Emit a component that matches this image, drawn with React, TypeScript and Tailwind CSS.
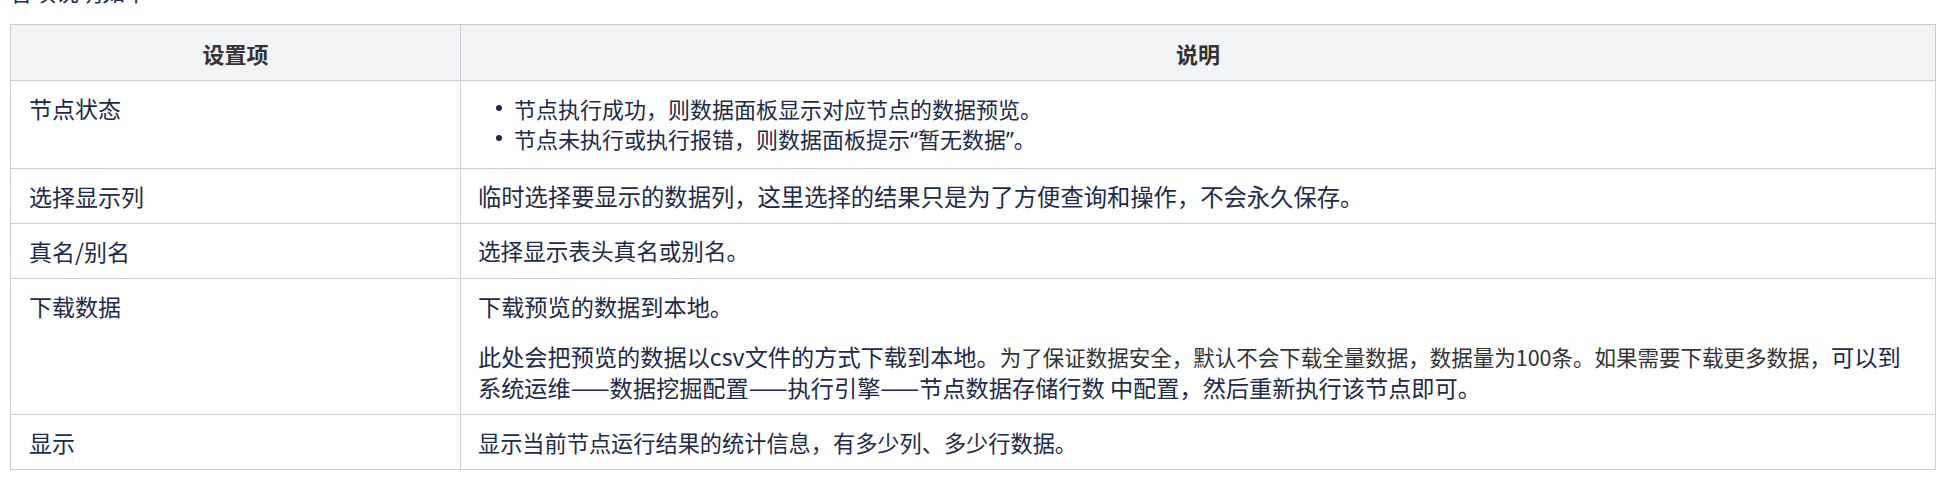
import React from "react";

const font = { fontFamily: '"Noto Sans CJK SC", "Noto Sans", sans-serif' };

function Dot() {
  return <span className="ml-[18px] mr-[12px] mt-[12px] h-[6px] w-[6px] shrink-0 rounded-full bg-[#1d2a4a]" />;
}

export default function App() {
  return (
    <div className="w-[1946px] h-[484px] overflow-hidden bg-white px-[10px]" style={font}>
      <div className="-mt-[24px] h-[30px] leading-[30px] text-[23px] text-[#1d2a4a]">各项说明如下</div>
      <table className="mt-[18px] w-[1926px] table-fixed border-collapse text-[23px] leading-[30px] text-[#1d2a4a]">
        <colgroup>
          <col className="w-[450px]" />
          <col />
        </colgroup>
        <thead>
          <tr className="bg-[#f3f4f6]">
            <th className="h-[56px] border border-[#c9cdd6] px-[18px] text-center text-[22px] font-bold text-[#333333]">设置项</th>
            <th className="h-[56px] border border-[#c9cdd6] px-[18px] text-center text-[22px] font-bold text-[#333333]">说明</th>
          </tr>
        </thead>
        <tbody>
          <tr>
            <td className="border border-[#c9cdd6] px-[18px] pt-[12px] pb-[12px] align-top">节点状态</td>
            <td className="border border-[#c9cdd6] px-[17px] pt-[12px] pb-[12px] align-top text-[22px]">
              <ul className="mb-[2px]">
                <li className="flex">
                  <Dot />
                  <span>节点执行成功，则数据面板显示对应节点的数据预览。</span>
                </li>
                <li className="flex">
                  <Dot />
                  <span>
                    节点未执行或执行报错，则数据面板提示
                    <span style={{ fontFamily: '"Noto Sans", sans-serif' }}>“</span>
                    暂无数据
                    <span style={{ fontFamily: '"Noto Sans", sans-serif' }}>”</span>。
                  </span>
                </li>
              </ul>
            </td>
          </tr>
          <tr>
            <td className="border border-[#c9cdd6] px-[18px] py-[12px] align-top">选择显示列</td>
            <td className="border border-[#c9cdd6] px-[17px] py-[12px] align-top text-[23.3px]">
              临时选择要显示的数据列，这里选择的结果只是为了方便查询和操作，不会永久保存。
            </td>
          </tr>
          <tr>
            <td className="border border-[#c9cdd6] px-[18px] py-[12px] align-top">真名/别名</td>
            <td className="border border-[#c9cdd6] px-[17px] py-[12px] align-top text-[22.6px]">选择显示表头真名或别名。</td>
          </tr>
          <tr>
            <td className="border border-[#c9cdd6] px-[18px] py-[12px] align-top">下载数据</td>
            <td className="border border-[#c9cdd6] px-[17px] py-[12px] align-top text-[23.2px]">
              <p>下载预览的数据到本地。</p>
              <p className="mt-[20px]">
                此处会把预览的数据以csv文件的方式下载到本地。
                <span className="text-[21.5px] text-[#333333]">为了保证数据安全，默认不会下载全量数据，数据量为100条。如果需要下载更多数据，</span>
                可以到
                <br />
                系统运维——数据挖掘配置——执行引擎——节点数据存储行数 中配置，然后重新执行该节点即可。
              </p>
            </td>
          </tr>
          <tr>
            <td className="border border-[#c9cdd6] px-[18px] py-[12px] align-top">显示</td>
            <td className="border border-[#c9cdd6] px-[17px] py-[12px] align-top text-[22.2px]">
              显示当前节点运行结果的统计信息，有多少列、多少行数据。
            </td>
          </tr>
        </tbody>
      </table>
    </div>
  );
}
